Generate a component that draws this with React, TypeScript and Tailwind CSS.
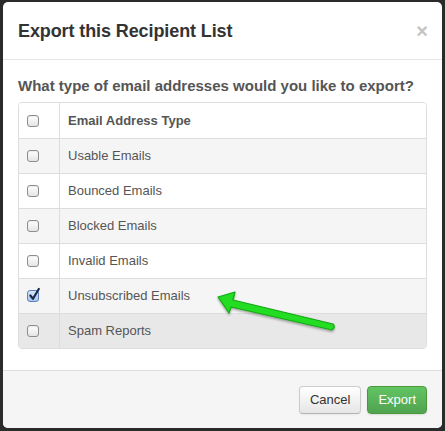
import React from "react";

const rows = [
  { label: "Usable Emails", checked: false, bg: "bg-[#f5f5f5]" },
  { label: "Bounced Emails", checked: false, bg: "bg-white" },
  { label: "Blocked Emails", checked: false, bg: "bg-[#f5f5f5]" },
  { label: "Invalid Emails", checked: false, bg: "bg-white" },
  { label: "Unsubscribed Emails", checked: true, bg: "bg-[#f5f5f5]" },
  { label: "Spam Reports", checked: false, bg: "bg-[#e8e8e8]" },
];

function Box({ checked }: { checked: boolean }) {
  if (checked) {
    return (
      <div className="relative w-[12px] h-[12px] rounded-[3px] border border-[#5b7fbf] bg-gradient-to-b from-[#d6e6fb] to-[#a9c6ee]">
        <svg className="absolute left-[0px] top-[-4px]" width="13" height="15" viewBox="0 0 13 15">
          <path d="M2.3 8.5 L5 11.8 L10.8 2" fill="none" stroke="#1b2a48" strokeWidth="2.2" strokeLinecap="round" strokeLinejoin="round" />
        </svg>
      </div>
    );
  }
  return (
    <div className="w-[12px] h-[12px] rounded-[3px] border border-[#8d8d8d] bg-gradient-to-b from-[#ffffff] to-[#e4e4e4] shadow-[inset_0_1px_1px_rgba(0,0,0,0.08)]" />
  );
}

export default function App() {
  return (
    <div
      className="w-[445px] h-[431px] bg-[#2b2b2b] pt-[2px] pl-[3px] pr-[3px] pb-[3px]"
      style={{ fontFamily: '"Liberation Sans", Arial, sans-serif' }}
    >
      <div className="relative w-full h-full bg-white rounded-[5px] overflow-hidden flex flex-col">
        <div className="h-[58px] border-b border-[#e5e5e5] flex items-center justify-between pl-[15px] pr-[14px] shrink-0">
          <div className="text-[18px] font-bold text-[#333] tracking-[-0.1px] pt-[1px]">Export this Recipient List</div>
          <div className="text-[20px] leading-none text-[#c4c4c4] font-bold">×</div>
        </div>
        <div className="px-[15px] pt-[17px] flex-1">
          <div className="text-[15px] font-bold text-[#555] leading-[18px]">
            What type of email addresses would you like to export?
          </div>
          <div className="mt-[7px] border border-[#dddddd] rounded-[4px] overflow-hidden">
            <div className="flex h-[35px] bg-white">
              <div className="w-[41px] border-r border-[#dddddd] flex items-center pl-[8px]">
                <Box checked={false} />
              </div>
              <div className="flex-1 flex items-center pl-[8px] text-[13px] font-bold text-[#555]">
                Email Address Type
              </div>
            </div>
            {rows.map((r) => (
              <div key={r.label} className={`flex h-[35px] border-t border-[#dddddd] ${r.bg}`}>
                <div className="w-[41px] border-r border-[#dddddd] flex items-center pl-[8px]">
                  <Box checked={r.checked} />
                </div>
                <div className="flex-1 flex items-center pl-[8px] text-[13px] text-[#555]">{r.label}</div>
              </div>
            ))}
          </div>
        </div>
        <div className="h-[58px] border-t border-[#dddddd] bg-[#f5f5f5] flex items-center justify-end gap-[6px] pr-[15px] shrink-0">
          <button className="h-[28px] px-[10px] rounded-[4px] border border-[#cccccc] border-b-[#b3b3b3] bg-gradient-to-b from-[#ffffff] to-[#e6e6e6] text-[13px] text-[#333] shadow-[inset_0_1px_0_rgba(255,255,255,0.2),0_1px_2px_rgba(0,0,0,0.05)]">
            Cancel
          </button>
          <button className="h-[28px] px-[10px] rounded-[4px] border border-[#4a9a3a] bg-gradient-to-b from-[#62c462] to-[#51a351] text-[13px] text-white shadow-[0_1px_2px_rgba(0,0,0,0.1)]">
            Export
          </button>
        </div>
        <svg className="absolute left-0 top-0 pointer-events-none" width="439" height="426" viewBox="0 0 439 426">
          <defs>
            <filter id="sh" x="-20%" y="-20%" width="140%" height="140%">
              <feDropShadow dx="0" dy="1.5" stdDeviation="1.2" floodColor="#000" floodOpacity="0.35" />
            </filter>
          </defs>
          <g filter="url(#sh)" transform="translate(-3,-2)">
            <path
              d="M218 297 L235 292 L233 300 L333 324 Q336 327 332 330 L231 307 L229 313 Z"
              fill="#22dd22"
              stroke="#14a814"
              strokeWidth="1.2"
              strokeLinejoin="round"
            />
          </g>
        </svg>
      </div>
    </div>
  );
}
